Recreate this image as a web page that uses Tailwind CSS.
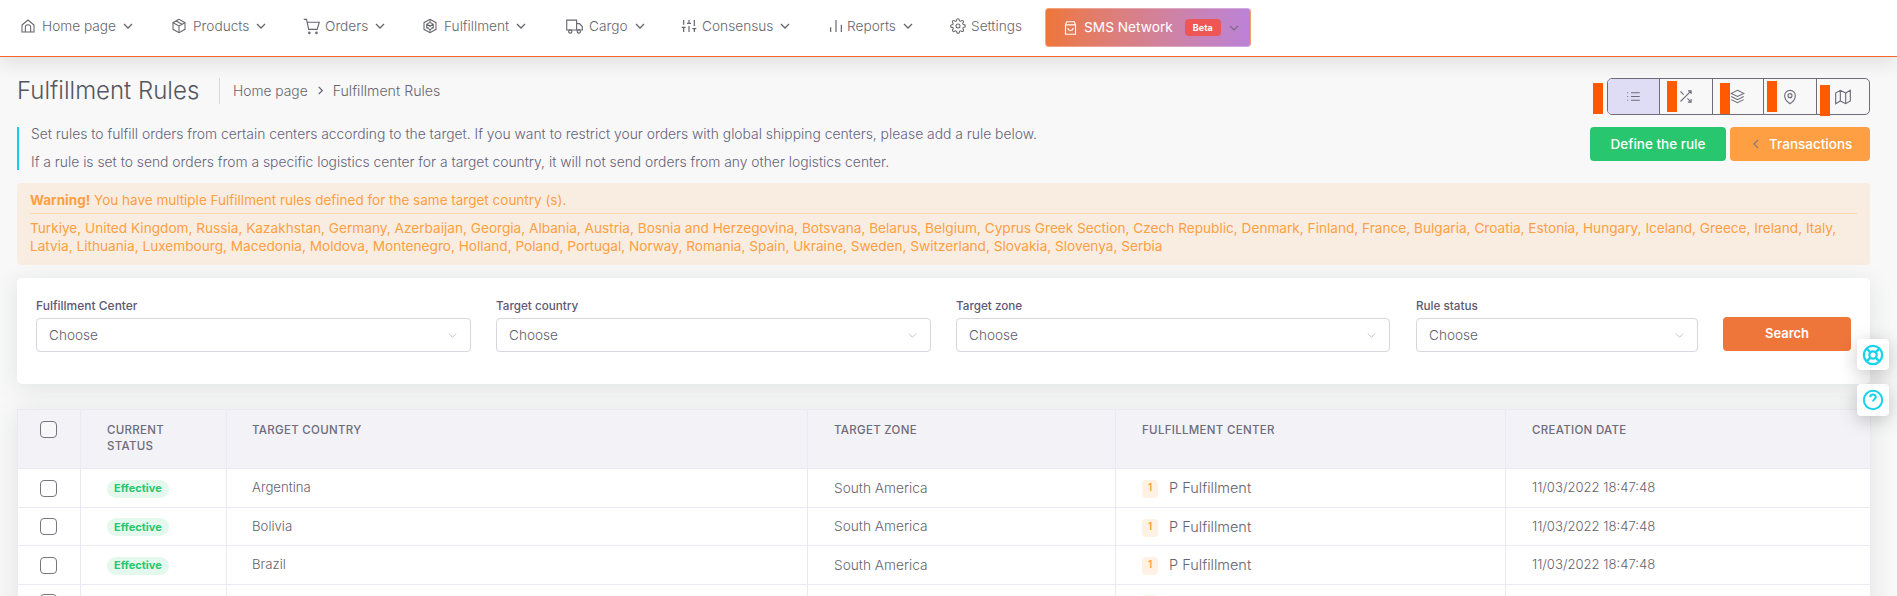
<!DOCTYPE html>
<html lang="en">
<head>
  <meta charset="UTF-8" />
  <title>Fulfillment Rules</title>
  <script src="https://cdn.jsdelivr.net/npm/@tailwindcss/browser@4"></script>
</head>
<body class="bg-[#f8f8f8] h-[596px] overflow-hidden font-['Inter',sans-serif] text-[13px] text-[#6e6b7b]">
  <!-- top nav -->
  <nav class="relative z-10 h-[57px] bg-white border-b border-[#f0692a] shadow-[0_6px_20px_rgba(0,0,0,0.1)] flex items-center pl-[20px] pb-[3px] text-[13.7px] font-light text-[#66666f]">
    <a class="flex items-center w-[151px]">
      <svg class="w-[16px] h-[16px] mr-[6px]" viewBox="0 0 24 24" fill="none" stroke="currentColor" stroke-width="1.6"><path d="M3 10.5 12 3l9 7.5V21H3z"/><path d="M8 21v-7a4 4 0 0 1 8 0v7"/></svg>
      Home page
      <svg class="w-[10px] h-[10px] ml-[7px]" viewBox="0 0 10 10" fill="none" stroke="currentColor" stroke-width="1.3"><path d="m1 3 4 4 4-4"/></svg>
    </a>
    <a class="flex items-center w-[132px]">
      <svg class="w-[16px] h-[16px] mr-[6px]" viewBox="0 0 24 24" fill="none" stroke="currentColor" stroke-width="1.6"><path d="M12 2 3 7v10l9 5 9-5V7z"/><path d="m3 7 9 5 9-5M12 12v10M7.5 4.5l9 5"/></svg>
      Products
      <svg class="w-[10px] h-[10px] ml-[7px]" viewBox="0 0 10 10" fill="none" stroke="currentColor" stroke-width="1.3"><path d="m1 3 4 4 4-4"/></svg>
    </a>
    <a class="flex items-center w-[119px]">
      <svg class="w-[17px] h-[17px] mr-[5px]" viewBox="0 0 24 24" fill="none" stroke="currentColor" stroke-width="1.6"><path d="M1 2h4l3 14h12l3-10H6"/><circle cx="9" cy="21" r="1"/><circle cx="19" cy="21" r="1"/></svg>
      Orders
      <svg class="w-[10px] h-[10px] ml-[7px]" viewBox="0 0 10 10" fill="none" stroke="currentColor" stroke-width="1.3"><path d="m1 3 4 4 4-4"/></svg>
    </a>
    <a class="flex items-center w-[144px]">
      <svg class="w-[16px] h-[16px] mr-[6px]" viewBox="0 0 24 24" fill="none" stroke="currentColor" stroke-width="1.6"><path d="M12 2 21 7v10l-9 5-9-5V7z"/><path d="M12 6.5 17 9.5v5l-5 3-5-3v-5zM7 9.5l10 5M17 9.5l-10 5M12 2v4.500M12 17.500V22"/></svg>
      Fulfillment
      <svg class="w-[10px] h-[10px] ml-[7px]" viewBox="0 0 10 10" fill="none" stroke="currentColor" stroke-width="1.3"><path d="m1 3 4 4 4-4"/></svg>
    </a>
    <a class="flex items-center w-[115px]">
      <svg class="w-[17px] h-[17px] mr-[6px]" viewBox="0 0 24 24" fill="none" stroke="currentColor" stroke-width="1.6"><path d="M1 3h14v14H1zM15 8h4l4 4v5h-8z"/><circle cx="6" cy="19" r="2.300"/><circle cx="18" cy="19" r="2.300"/></svg>
      Cargo
      <svg class="w-[10px] h-[10px] ml-[7px]" viewBox="0 0 10 10" fill="none" stroke="currentColor" stroke-width="1.3"><path d="m1 3 4 4 4-4"/></svg>
    </a>
    <a class="flex items-center w-[147px]">
      <svg class="w-[16px] h-[16px] mr-[5px]" viewBox="0 0 24 24" fill="none" stroke="currentColor" stroke-width="1.8"><path d="M4 21v-7M4 10V3M12 21v-9M12 8V3M20 21v-5M20 12V3M1 14h6M9 8h6M17 16h6"/></svg>
      Consensus
      <svg class="w-[10px] h-[10px] ml-[7px]" viewBox="0 0 10 10" fill="none" stroke="currentColor" stroke-width="1.3"><path d="m1 3 4 4 4-4"/></svg>
    </a>
    <a class="flex items-center w-[122px]">
      <svg class="w-[16px] h-[16px] mr-[3px]" viewBox="0 0 24 24" fill="none" stroke="currentColor" stroke-width="1.8"><path d="M12 21V3M20 21V10M4 21v-7"/></svg>
      Reports
      <svg class="w-[10px] h-[10px] ml-[7px]" viewBox="0 0 10 10" fill="none" stroke="currentColor" stroke-width="1.3"><path d="m1 3 4 4 4-4"/></svg>
    </a>
    <a class="flex items-center w-[95px]">
      <svg class="w-[16px] h-[16px] mr-[5px]" viewBox="0 0 24 24" fill="none" stroke="currentColor" stroke-width="1.6"><circle cx="12" cy="12" r="3"/><path d="M19.400 15a1.650 1.650 0 0 0 .330 1.820l.060.060a2 2 0 1 1-2.830 2.830l-.060-.060a1.650 1.650 0 0 0-2.800 1.170V21a2 2 0 1 1-4 0v-.090a1.650 1.650 0 0 0-2.880-1.110l-.060.060a2 2 0 1 1-2.830-2.830l.060-.060A1.650 1.650 0 0 0 3 14.100H3a2 2 0 1 1 0-4h.090a1.650 1.650 0 0 0 1.110-2.880l-.060-.060a2 2 0 1 1 2.830-2.830l.060.060A1.650 1.650 0 0 0 9.900 3.200V3a2 2 0 1 1 4 0v.090a1.650 1.650 0 0 0 2.800 1.170l.060-.060a2 2 0 1 1 2.830 2.830l-.060.060a1.650 1.650 0 0 0 1.170 2.800H21a2 2 0 1 1 0 4h-.090a1.650 1.650 0 0 0-1.510 1.110z"/></svg>
      Settings
    </a>
    <a class="flex items-center w-[206px] h-[39px] mt-[2px] rounded-[4px] border border-white/30 bg-gradient-to-r from-[#ee7636] to-[#bb82d8] text-white font-normal pl-[17px]">
      <svg class="w-[15px] h-[16px] mr-[6px]" viewBox="0 0 24 24" fill="none" stroke="currentColor" stroke-width="1.8"><path d="M6 2h12l2 5v15H4V7zM4 7h16M8 12a4 4 0 0 0 8 0"/></svg>
      SMS Network
      <span class="ml-[12px] w-[36px] h-[17px] rounded-[4px] bg-[#ee5555] text-[9px] font-bold flex items-center justify-center">Beta</span>
      <svg class="w-[10px] h-[10px] ml-[8px] text-[#7c6a80]" viewBox="0 0 10 10" fill="none" stroke="currentColor" stroke-width="1.2"><path d="m1 3 4 4 4-4"/></svg>
    </a>
  </nav>

  <main class="relative pl-[17px] pr-[27px]">
    <!-- page head -->
    <div class="flex justify-between h-[126px]">
      <div>
        <div class="flex items-center h-[68px]">
          <h1 class="text-[24px] font-light text-[#55555d] pr-[13px] border-r border-[#d8d6de] leading-[26px] w-[203px] whitespace-nowrap">Fulfillment Rules</h1>
          <div class="flex items-center ml-[13px] text-[13.8px] font-light text-[#66666f]">
            Home page
            <svg class="w-[9px] h-[9px] mx-[8px]" viewBox="0 0 10 10" fill="none" stroke="currentColor" stroke-width="1.4"><path d="m3 1 4 4-4 4"/></svg>
            <span class="text-[14.2px]">Fulfillment Rules</span>
          </div>
        </div>
        <div class="mt-[2px] border-l-[2px] border-[#0fd2ea] pl-[12px] h-[43px] flex flex-col justify-between leading-[16px] text-[13.87px] font-light text-[#65637a]">
          <p class="-mt-[1px]">Set rules to fulfill orders from certain centers according to the target. If you want to restrict your orders with global shipping centers, please add a rule below.</p>
          <p>If a rule is set to send orders from a specific logistics center for a target country, it will not send orders from any other logistics center.</p>
        </div>
      </div>
      <div class="w-[280px] flex flex-col items-end pt-[21px]">
        <div class="relative flex w-[263px] h-[37px] border border-[#6e6b7b] rounded-[5px] text-[#6e6b7b]">
          <div class="w-[52px] bg-[#dfdcf6] rounded-l-[4px] flex items-center justify-center border-r border-[#6e6b7b]">
            <svg class="w-[15px] h-[15px]" viewBox="0 0 24 24" fill="none" stroke="currentColor" stroke-width="1.7"><path d="M8 6h14M8 12h14M8 18h14M2 6h1.500M2 12h1.500M2 18h1.500"/></svg>
          </div>
          <div class="w-[53px] flex items-center justify-center border-r border-[#6e6b7b]">
            <svg class="w-[15px] h-[15px]" viewBox="0 0 24 24" fill="none" stroke="currentColor" stroke-width="1.7"><path d="M16 3h5v5M4 20 21 3M21 16v5h-5M15 15l6 6M4 4l5 5"/></svg>
          </div>
          <div class="w-[52px] flex items-center justify-center border-r border-[#6e6b7b]">
            <svg class="w-[15px] h-[15px]" viewBox="0 0 24 24" fill="none" stroke="currentColor" stroke-width="1.7"><path d="m12 2 10 5-10 5L2 7zM2 12l10 5 10-5M2 17l10 5 10-5"/></svg>
          </div>
          <div class="w-[53px] flex items-center justify-center border-r border-[#6e6b7b]">
            <svg class="w-[16px] h-[16px]" viewBox="0 0 24 24" fill="none" stroke="currentColor" stroke-width="1.7"><path d="M20 10c0 7-8 12-8 12s-8-5-8-12a8 8 0 0 1 16 0z"/><circle cx="12" cy="10" r="3"/></svg>
          </div>
          <div class="w-[52px] flex items-center justify-center">
            <svg class="w-[16px] h-[16px]" viewBox="0 0 24 24" fill="none" stroke="currentColor" stroke-width="1.7"><path d="M1 6v16l7-4 8 4 7-4V2l-7 4-8-4zM8 2v16M16 6v16"/></svg>
          </div>
          <span class="absolute left-[-15px] top-[4px] w-[10px] h-[31px] bg-[#ff5a00]"></span>
          <span class="absolute left-[59px] top-[2px] w-[10px] h-[31px] bg-[#ff5a00]"></span>
          <span class="absolute left-[112px] top-[4px] w-[10px] h-[31px] bg-[#ff5a00]"></span>
          <span class="absolute left-[159px] top-[2px] w-[10px] h-[31px] bg-[#ff5a00]"></span>
          <span class="absolute left-[212px] top-[6px] w-[10px] h-[31px] bg-[#ff5a00]"></span>
        </div>
        <div class="flex gap-[4px] mt-[12px] text-white text-[13.5px] font-medium">
          <button class="w-[136px] h-[34px] rounded-[4px] bg-[#28c76f]">Define the rule</button>
          <button class="w-[140px] h-[34px] rounded-[4px] bg-[#ff9f43] flex items-center pl-[23px]">
            <svg class="w-[7px] h-[10px] mr-[9px] text-[#8a7d78]" viewBox="0 0 7 10" fill="none" stroke="currentColor" stroke-width="1.2"><path d="M5 1 1 5l4 4"/></svg>
            Transactions
          </button>
        </div>
      </div>
    </div>

    <!-- warning -->
    <div class="h-[82px] bg-[#f9ede1] rounded-[4px] px-[13px] text-[#ff9f43] text-[13.63px]">
      <p class="h-[31px] leading-[34px] text-[13.5px] border-b border-[#fdd7ad]"><strong class="font-bold">Warning!</strong> You have multiple Fulfillment rules defined for the same target country (s).</p>
      <p class="pt-[5px] leading-[18px]">Turkiye, United Kingdom, Russia, Kazakhstan, Germany, Azerbaijan, Georgia, Albania, Austria, Bosnia and Herzegovina, Botsvana, Belarus, Belgium, Cyprus Greek Section, Czech Republic, Denmark, Finland, France, Bulgaria, Croatia, Estonia, Hungary, Iceland, Greece, Ireland, Italy, Latvia, Lithuania, Luxembourg, Macedonia, Moldova, Montenegro, Holland, Poland, Portugal, Norway, Romania, Spain, Ukraine, Sweden, Switzerland, Slovakia, Slovenya, Serbia</p>
    </div>

    <!-- filters -->
    <div class="mt-[13px] h-[106px] bg-white rounded-[5px] shadow-[0_4px_24px_rgba(34,41,47,0.1)] pl-[19px] pr-[19px] pt-[21px] flex">
      <div class="w-[435px] mr-[25px]">
        <label class="block text-[12px] font-medium leading-[14px] mb-[5px] text-[#5e5873]">Fulfillment Center</label>
        <div class="h-[34px] border border-[#d8d6de] rounded-[4px] flex items-center justify-between pl-[12px] pr-[13px] pt-[1px] text-[13.6px] font-light text-[#5f5c6c]">Choose<svg class="w-[9px] h-[9px] text-[#c4c2cc]" viewBox="0 0 10 10" fill="none" stroke="currentColor" stroke-width="1.1"><path d="m1 3 4 4 4-4"/></svg></div>
      </div>
      <div class="w-[435px] mr-[25px]">
        <label class="block text-[11.7px] font-medium leading-[14px] mb-[5px] text-[#5e5873]">Target country</label>
        <div class="h-[34px] border border-[#d8d6de] rounded-[4px] flex items-center justify-between pl-[12px] pr-[13px] pt-[1px] text-[13.6px] font-light text-[#5f5c6c]">Choose<svg class="w-[9px] h-[9px] text-[#c4c2cc]" viewBox="0 0 10 10" fill="none" stroke="currentColor" stroke-width="1.1"><path d="m1 3 4 4 4-4"/></svg></div>
      </div>
      <div class="w-[434px] mr-[26px]">
        <label class="block text-[11.7px] font-medium leading-[14px] mb-[5px] text-[#5e5873]">Target zone</label>
        <div class="h-[34px] border border-[#d8d6de] rounded-[4px] flex items-center justify-between pl-[12px] pr-[13px] pt-[1px] text-[13.6px] font-light text-[#5f5c6c]">Choose<svg class="w-[9px] h-[9px] text-[#c4c2cc]" viewBox="0 0 10 10" fill="none" stroke="currentColor" stroke-width="1.1"><path d="m1 3 4 4 4-4"/></svg></div>
      </div>
      <div class="w-[282px] mr-[25px]">
        <label class="block text-[11.7px] font-medium leading-[14px] mb-[5px] text-[#5e5873]">Rule status</label>
        <div class="h-[34px] border border-[#d8d6de] rounded-[4px] flex items-center justify-between pl-[12px] pr-[13px] pt-[1px] text-[13.6px] font-light text-[#5f5c6c]">Choose<svg class="w-[9px] h-[9px] text-[#c4c2cc]" viewBox="0 0 10 10" fill="none" stroke="currentColor" stroke-width="1.1"><path d="m1 3 4 4 4-4"/></svg></div>
      </div>
      <button class="w-[128px] h-[34px] mt-[18px] rounded-[4px] bg-[#ef763a] text-white text-[13px] font-semibold">Search</button>
    </div>

    <!-- table -->
    <table class="mt-[25px] w-[1853px] table-fixed border-collapse bg-white shadow-[0_4px_24px_rgba(34,41,47,0.1)]">
      <colgroup>
        <col class="w-[63px]" /><col class="w-[146px]" /><col class="w-[581px]" /><col class="w-[308px]" /><col class="w-[390px]" /><col class="w-[365px]" />
      </colgroup>
      <thead class="bg-[#f3f2f7] text-[11.5px] font-medium tracking-[0.3px] text-[#6e6b7b] text-left uppercase">
        <tr class="h-[59px] align-top">
          <th class="border border-[#ebe9f1] pt-[11px] pl-[22px]"><span class="block w-[17px] h-[17px] rounded-[4px] border-[1.5px] border-[#77757f] bg-white/40"></span></th>
          <th class="border border-[#ebe9f1] pt-[12px] pl-[26px] font-medium leading-[16px]">Current<br />Status</th>
          <th class="border border-[#ebe9f1] pt-[12px] pl-[25px] font-medium leading-[16px]">Target country</th>
          <th class="border border-[#ebe9f1] pt-[12px] pl-[26px] font-medium leading-[16px]">Target zone</th>
          <th class="border border-[#ebe9f1] pt-[12px] pl-[26px] font-medium leading-[16px]">Fulfillment Center</th>
          <th class="border border-[#ebe9f1] pt-[12px] pl-[26px] font-medium leading-[16px]">Creation date</th>
        </tr>
      </thead>
      <tbody class="text-[13px] font-light text-[#65636f]">
        <tr class="h-[39px]">
          <td class="border border-[#ebe9f1] pl-[22px]"><span class="block w-[17px] h-[17px] rounded-[4px] border-[1.5px] border-[#77757f]"></span></td>
          <td class="border border-[#ebe9f1] pl-[26px]"><span class="inline-flex items-center h-[18px] px-[7px] rounded-full bg-[#e5f8ed] text-[#28c76f] text-[11px] font-bold">Effective</span></td>
          <td class="border border-[#ebe9f1] pl-[25px] text-[13.2px]">Argentina</td>
          <td class="border border-[#ebe9f1] pl-[26px] text-[13.7px]">South America</td>
          <td class="border border-[#ebe9f1] pl-[26px] text-[14.5px]"><span class="inline-flex justify-center w-[16px] h-[18px] mr-[11px] rounded-[4px] bg-[#fff1e3] text-[#ff9f43] text-[10px] font-semibold align-middle">1</span>P Fulfillment</td>
          <td class="border border-[#ebe9f1] pl-[26px] text-[13.1px]">11/03/2022 18:47:48</td>
        </tr>
        <tr class="h-[38px]">
          <td class="border border-[#ebe9f1] pl-[22px]"><span class="block w-[17px] h-[17px] rounded-[4px] border-[1.5px] border-[#77757f]"></span></td>
          <td class="border border-[#ebe9f1] pl-[26px]"><span class="inline-flex items-center h-[18px] px-[7px] rounded-full bg-[#e5f8ed] text-[#28c76f] text-[11px] font-bold">Effective</span></td>
          <td class="border border-[#ebe9f1] pl-[25px] text-[13.2px]">Bolivia</td>
          <td class="border border-[#ebe9f1] pl-[26px] text-[13.7px]">South America</td>
          <td class="border border-[#ebe9f1] pl-[26px] text-[14.5px]"><span class="inline-flex justify-center w-[16px] h-[18px] mr-[11px] rounded-[4px] bg-[#fff1e3] text-[#ff9f43] text-[10px] font-semibold align-middle">1</span>P Fulfillment</td>
          <td class="border border-[#ebe9f1] pl-[26px] text-[13.1px]">11/03/2022 18:47:48</td>
        </tr>
        <tr class="h-[39px]">
          <td class="border border-[#ebe9f1] pl-[22px]"><span class="block w-[17px] h-[17px] rounded-[4px] border-[1.5px] border-[#77757f]"></span></td>
          <td class="border border-[#ebe9f1] pl-[26px]"><span class="inline-flex items-center h-[18px] px-[7px] rounded-full bg-[#e5f8ed] text-[#28c76f] text-[11px] font-bold">Effective</span></td>
          <td class="border border-[#ebe9f1] pl-[25px] text-[13.2px]">Brazil</td>
          <td class="border border-[#ebe9f1] pl-[26px] text-[13.7px]">South America</td>
          <td class="border border-[#ebe9f1] pl-[26px] text-[14.5px]"><span class="inline-flex justify-center w-[16px] h-[18px] mr-[11px] rounded-[4px] bg-[#fff1e3] text-[#ff9f43] text-[10px] font-semibold align-middle">1</span>P Fulfillment</td>
          <td class="border border-[#ebe9f1] pl-[26px] text-[13.1px]">11/03/2022 18:47:48</td>
        </tr>
        <!-- next row is cut by the window, only the tops of its shapes show -->
        <tr class="h-[39px] align-top">
          <td class="border border-[#ebe9f1] pl-[22px] pt-[9px]"><span class="block w-[17px] h-[17px] rounded-[4px] border-[1.5px] border-[#77757f]"></span></td>
          <td class="border border-[#ebe9f1] pl-[26px] pt-[11px]"><span class="block w-[62px] h-[18px] rounded-full bg-[#e5f8ed]"></span></td>
          <td class="border border-[#ebe9f1]"></td>
          <td class="border border-[#ebe9f1]"></td>
          <td class="border border-[#ebe9f1] pl-[26px] pt-[10px]"><span class="block w-[16px] h-[18px] rounded-[4px] bg-[#fff1e3]"></span></td>
          <td class="border border-[#ebe9f1]"></td>
        </tr>
      </tbody>
    </table>

    <!-- floating help buttons -->
    <div class="absolute left-[1857px] top-[282px] flex flex-col gap-[14px]">
      <a class="w-[32px] h-[31px] rounded-[4px] bg-white shadow-[0_4px_18px_rgba(0,0,0,0.22)] flex items-center justify-center text-[#19d3ea]">
        <svg class="w-[22px] h-[22px]" viewBox="0 0 24 24" fill="none" stroke="currentColor" stroke-width="2.5"><circle cx="12" cy="12" r="10"/><circle cx="12" cy="12" r="4"/><path d="m5 5 4.200 4.200M14.800 14.800 19 19M19 5l-4.200 4.200M9.200 14.800 5 19"/></svg>
      </a>
      <a class="w-[32px] h-[32px] rounded-[4px] bg-white shadow-[0_4px_18px_rgba(0,0,0,0.22)] flex items-center justify-center text-[#19d3ea]">
        <svg class="w-[22px] h-[22px]" viewBox="0 0 24 24" fill="none" stroke="currentColor" stroke-width="2.2"><circle cx="12" cy="12" r="10"/><path d="M9 9a3 3 0 0 1 6 0c0 2-3 2.500-3 4.500M12 17.500h.010"/></svg>
      </a>
    </div>
  </main>
</body>
</html>
